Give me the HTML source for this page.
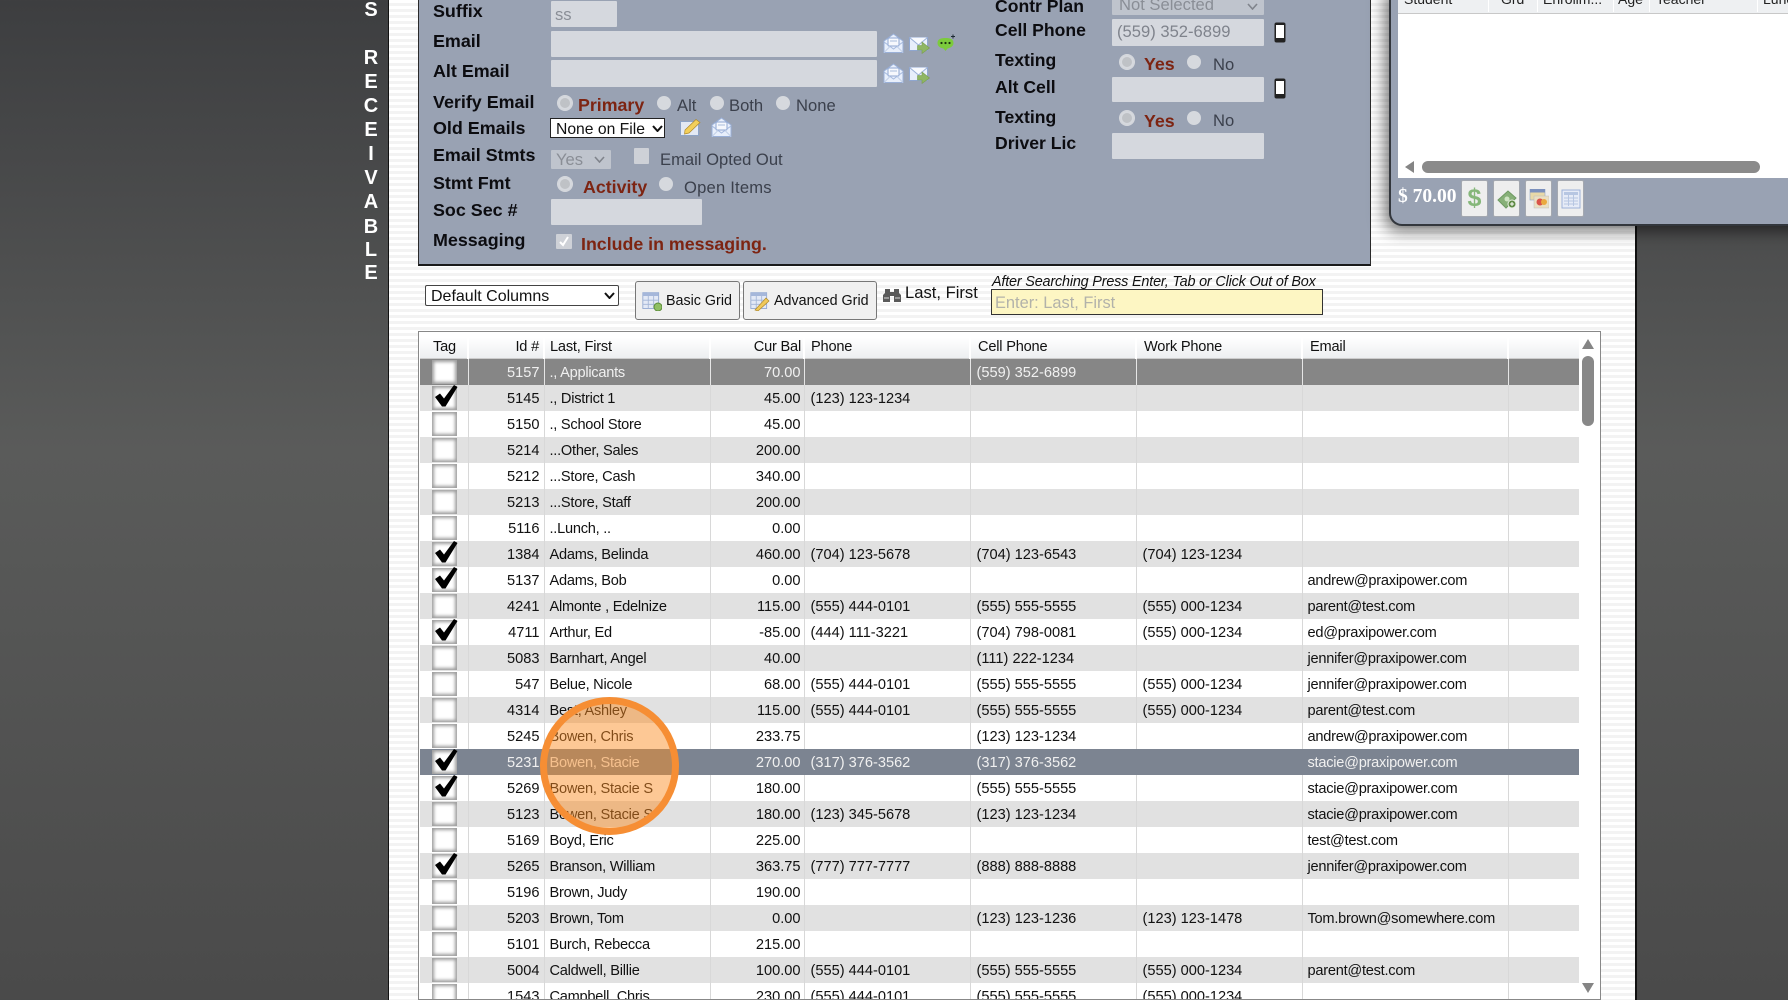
<!DOCTYPE html>
<html><head><meta charset="utf-8"><title>Accounts Receivable</title>
<style>
html,body{margin:0;padding:0;width:1788px;height:1000px;overflow:hidden}
body{position:relative;background:linear-gradient(180deg,#3d3e40 0,#5a5b5a 45%,#4a4a4a 100%);font-family:"Liberation Sans",sans-serif;color:#111}
.a{position:absolute}
.t{position:absolute;white-space:nowrap;line-height:20px;height:20px}
.page{position:absolute;left:388px;top:0;width:1246px;height:1000px;border-left:1px solid #111;border-right:2px solid #111;background:repeating-linear-gradient(180deg,#fff 0,#fff 3px,#f3f3f3 3px,#f3f3f3 6px);box-sizing:content-box}
.v{position:absolute;left:356px;width:30px;text-align:center;color:#fff;font:bold 20px/24px "Liberation Sans",sans-serif}
.panel{position:absolute;left:418px;top:-10px;width:951px;height:273px;background:#99a2b3;border:1px solid #2a2a2a;border-bottom:2px solid #1a1a1a}
.l{font-weight:bold;font-size:17.6px;color:#0c0c10}
.lx{font-size:17.9px}
.g{font-size:16.6px;color:#3b404c}
.r{font-weight:bold;font-size:17.8px;color:#7d2412}
.in{position:absolute;background:#d5d8de;border-radius:1px}
.rad{position:absolute;width:14px;height:14px;border-radius:50%;background:#d6d9de}
.rad.on{background:#bfc2c6;box-shadow:0 0 0 2px #d6d9de inset,0 0 0 1px #d6d9de}
.btn{position:absolute;background:#f0f0f0;border:1px solid #777;border-radius:3px;box-sizing:border-box;font-size:14.3px;line-height:20px}
table{border-collapse:collapse;table-layout:fixed;width:1159px;font-size:14.6px}
td,th{height:26px;padding:2px 3px 0 6px;box-sizing:border-box;border-right:1px solid #d8d8d8;white-space:nowrap;overflow:hidden;text-align:left;font-weight:normal;line-height:24px}
td:nth-child(3),td:nth-child(8){letter-spacing:-.25px;padding-left:5px}
th{height:27px;padding-top:2px;background:linear-gradient(180deg,#fff 20%,#eceef0 100%);border-right:2px solid #fff;box-shadow:inset 0 -1px #ccc;letter-spacing:-.2px}
th:nth-child(3){padding-left:5px}
td.n{text-align:right;padding-right:3px}
td:nth-child(2){padding-right:4px}
th.n{text-align:right}
td:first-child,th:first-child{text-align:center;padding-left:0;padding-right:0;position:relative}
th:first-child{padding-left:2px}
tr.e td{background:#e1e1e1}
tr.s0 td{background:#868686;color:#f0f0f0;border-right-color:#e6e6e6}
tr.s1 td{background:#7c8491;color:#f0f0f0;border-right-color:#7c8491}
td:last-child,th:last-child{border-right:0}
.c{position:absolute;left:12px;top:1px;width:25px;height:24px;background:#fff;box-shadow:inset 0 0 3px 2px #9c9c9c}
.c svg{position:absolute;left:2px;top:-1px;width:24px;height:22px;overflow:visible}
.circle{position:absolute;left:540px;top:697px;width:139px;height:138px;box-sizing:border-box;border-radius:50%;border:7px solid #f68e34;background:rgba(251,140,34,.48)}
.pop{position:absolute;left:1389px;top:-12px;width:430px;height:238px;box-sizing:border-box;background:#99a2b3;border:2px solid #33373d;border-radius:0 0 0 13px;box-shadow:-4px 5px 16px rgba(0,0,0,.55)}
.ph{font-size:14px;color:#222}
.pb{position:absolute;top:180px;width:27px;height:37px;background:#eeeeee;border:1px solid #a4a8b0;box-sizing:border-box;border-radius:2px}
.pb svg{position:absolute;left:3px;top:8px;width:20px;height:20px}
</style></head>
<body>
<svg width="0" height="0" style="position:absolute">
<defs>
<symbol id="chk" viewBox="0 0 24 22"><path d="M1 12 L6 8.500 L10 13.500 L20 0 L23.500 2 L11.500 21.500 L8 21.500 Z" fill="#000"/></symbol>
<symbol id="env" viewBox="0 0 21 20"><path d="M1 8 L10.500 1 L20 8 V19.500 H1Z" fill="#e8effb" stroke="#9ab0d8"/><rect x="5" y="5" width="11" height="8" rx="1" fill="#f6f8fd" stroke="#8fa6d0"/><path d="M7 8h7" stroke="#a8bbdc" fill="none"/><path d="M1 9 L10.500 16 L20 9" fill="none" stroke="#a5b9de"/><path d="M1 19.500 L7 13.500 M20 19.500 L14 13.500" stroke="#c2d0e8" fill="none"/></symbol>
<symbol id="mail" viewBox="0 0 21 17"><rect x="0.500" y="0.500" width="18" height="13" fill="#e8effb" stroke="#8fa6d0"/><path d="M0.500 0.500 L9.500 8 L18.500 0.500" fill="#f8fafe" stroke="#9ab0d8"/><path d="M8.500 8.500 H13 V5 L20.500 11 L13 16.500 V13 H8.500Z" fill="#8fb663" stroke="#7a9e50" stroke-width=".6"/></symbol>
<symbol id="chat" viewBox="0 0 19 19"><path d="M0.500 10 C0.500 6 4 5 8.500 5 C13 5 16.500 6 16.500 10 C16.500 13.500 13 15 10.500 15.500 L8.500 18 L6.500 15.500 C3.500 15 .5 13.500 .5 10Z" fill="#7ccb3c"/><circle cx="4.500" cy="10" r="1.100" fill="#1d3413"/><circle cx="8.500" cy="10" r="1.100" fill="#1d3413"/><circle cx="12.500" cy="10" r="1.100" fill="#1d3413"/><path d="M16 1.500v4M14 3.500h4" stroke="#1d2a33" stroke-width="1"/></symbol>
<symbol id="note" viewBox="0 0 21 17"><rect x="0.500" y="2.500" width="18" height="14" fill="#e3e9f4" stroke="#8da3c6"/><path d="M5 11 L16 0.500 L20 3.500 L9 14 L4.500 15Z" fill="#f3cf5a" stroke="#b08a2a" stroke-width=".7"/></symbol>
<symbol id="phone" viewBox="0 0 12 21"><rect x="0.500" y="0.500" width="11" height="20" rx="2" fill="#222"/><rect x="2" y="3" width="8" height="13" fill="#fff"/></symbol>
<symbol id="grid" viewBox="0 0 24 24"><rect x="1" y="2" width="19" height="19" fill="#e3e9f6" stroke="#8ca3cf"/><rect x="1" y="2" width="19" height="4" fill="#a5b7da"/><path d="M1 11h19M1 16h19M7.500 6v15M14 6v15" stroke="#a2b4d6" fill="none"/></symbol>
</defs></svg>

<div class="page"></div>

<div class="v" style="top:-2px">S</div>
<div class="v" style="top:46px">R</div>
<div class="v" style="top:70px">E</div>
<div class="v" style="top:94px">C</div>
<div class="v" style="top:118px">E</div>
<div class="v" style="top:142px">I</div>
<div class="v" style="top:166px">V</div>
<div class="v" style="top:190px">A</div>
<div class="v" style="top:215px">B</div>
<div class="v" style="top:238px">L</div>
<div class="v" style="top:261px">E</div>

<div class="panel"></div>

<div class="t l lx" style="left:433px;top:1px">Suffix</div>
<div class="t l lx" style="left:433px;top:31px">Email</div>
<div class="t l lx" style="left:433px;top:61px">Alt Email</div>
<div class="t l lx" style="left:433px;top:92px">Verify Email</div>
<div class="t l lx" style="left:433px;top:118px">Old Emails</div>
<div class="t l lx" style="left:433px;top:145px">Email Stmts</div>
<div class="t l lx" style="left:433px;top:173px">Stmt Fmt</div>
<div class="t l lx" style="left:433px;top:200px">Soc Sec #</div>
<div class="t l lx" style="left:433px;top:230px">Messaging</div>

<div class="in" style="left:551px;top:1px;width:66px;height:26px"></div>
<div class="t" style="left:555px;top:5px;font-size:16.6px;color:#8a8e96">ss</div>
<div class="in" style="left:551px;top:31px;width:326px;height:26px"></div>
<div class="in" style="left:551px;top:60px;width:326px;height:27px"></div>
<svg class="a" style="left:883px;top:33px;width:21px;height:20px"><use href="#env"/></svg>
<svg class="a" style="left:909px;top:37px;width:21px;height:17px"><use href="#mail"/></svg>
<svg class="a" style="left:937px;top:33px;width:19px;height:19px"><use href="#chat"/></svg>
<svg class="a" style="left:883px;top:63px;width:21px;height:20px"><use href="#env"/></svg>
<svg class="a" style="left:909px;top:67px;width:21px;height:17px"><use href="#mail"/></svg>

<div class="rad on" style="left:558px;top:96px"></div>
<div class="t r" style="left:578px;top:95px">Primary</div>
<div class="rad" style="left:657px;top:96px"></div>
<div class="t g" style="left:677px;top:96px">Alt</div>
<div class="rad" style="left:710px;top:96px"></div>
<div class="t g" style="left:729px;top:96px">Both</div>
<div class="rad" style="left:776px;top:96px"></div>
<div class="t g" style="left:796px;top:96px">None</div>

<div class="a" style="left:550px;top:118px;width:115px;height:20px;background:#fff;border:1px solid #222;box-sizing:border-box"></div>
<div class="t" style="left:556px;top:120px;font-size:15.7px;color:#111">None on File</div>
<svg class="a" style="left:652px;top:125px;width:11px;height:7px"><path d="M1 1 L5.500 6 L10 1" fill="none" stroke="#111" stroke-width="2"/></svg>
<svg class="a" style="left:680px;top:119px;width:21px;height:17px"><use href="#note"/></svg>
<svg class="a" style="left:711px;top:117px;width:21px;height:20px"><use href="#env"/></svg>

<div class="a" style="left:551px;top:150px;width:60px;height:19px;background:#bfc4cd;border-radius:1px"></div>
<div class="t" style="left:556px;top:150px;font-size:16.6px;color:#8a8e96">Yes</div>
<svg class="a" style="left:594px;top:156px;width:11px;height:7px"><path d="M1 1 L5.500 6 L10 1" fill="none" stroke="#80848c" stroke-width="1.600"/></svg>
<div class="a" style="left:634px;top:148px;width:15px;height:16px;background:#ced1d7;border-radius:1px"></div>
<div class="t g" style="left:660px;top:150px">Email Opted Out</div>

<div class="rad on" style="left:558px;top:177px"></div>
<div class="t r" style="left:583px;top:177px">Activity</div>
<div class="rad" style="left:659px;top:177px"></div>
<div class="t g" style="left:684px;top:178px;letter-spacing:.2px">Open Items</div>

<div class="in" style="left:551px;top:199px;width:151px;height:26px"></div>

<div class="a" style="left:556px;top:234px;width:16px;height:15px;background:#ced1d7;border-radius:1px"></div>
<svg class="a" style="left:556px;top:234px;width:16px;height:15px"><path d="M4 8 L7 11 L12 3" fill="none" stroke="#fff" stroke-width="2"/></svg>
<div class="t r" style="left:581px;top:234px">Include in messaging.</div>

<div class="t l" style="left:995px;top:-4px">Contr Plan</div>
<div class="t l" style="left:995px;top:20px">Cell Phone</div>
<div class="t l" style="left:995px;top:50px">Texting</div>
<div class="t l" style="left:995px;top:77px">Alt Cell</div>
<div class="t l" style="left:995px;top:107px">Texting</div>
<div class="t l" style="left:995px;top:133px">Driver Lic</div>

<div class="a" style="left:1112px;top:-5px;width:152px;height:20px;background:#bfc4cd;border-radius:1px"></div>
<div class="t" style="left:1119px;top:-5px;font-size:16.6px;color:#8a8e96">Not Selected</div>
<svg class="a" style="left:1247px;top:3px;width:11px;height:7px"><path d="M1 1 L5.500 6 L10 1" fill="none" stroke="#80848c" stroke-width="1.600"/></svg>
<div class="in" style="left:1112px;top:19px;width:152px;height:27px"></div>
<div class="t" style="left:1117px;top:22px;font-size:16.6px;color:#7f838c">(559) 352-6899</div>
<svg class="a" style="left:1274px;top:22px;width:12px;height:21px"><use href="#phone"/></svg>
<div class="rad on" style="left:1120px;top:55px"></div>
<div class="t r" style="left:1144px;top:54px">Yes</div>
<div class="rad" style="left:1187px;top:55px"></div>
<div class="t g" style="left:1213px;top:55px">No</div>
<div class="in" style="left:1112px;top:77px;width:152px;height:25px"></div>
<svg class="a" style="left:1274px;top:78px;width:12px;height:21px"><use href="#phone"/></svg>
<div class="rad on" style="left:1120px;top:111px"></div>
<div class="t r" style="left:1144px;top:111px">Yes</div>
<div class="rad" style="left:1187px;top:111px"></div>
<div class="t g" style="left:1213px;top:111px">No</div>
<div class="in" style="left:1112px;top:133px;width:152px;height:26px"></div>

<div class="a" style="left:425px;top:285px;width:194px;height:21px;background:#fff;border:1px solid #444;border-radius:2px;box-sizing:border-box"></div>
<div class="t" style="left:431px;top:287px;font-size:16px;color:#111">Default Columns</div>
<svg class="a" style="left:604px;top:292px;width:11px;height:7px"><path d="M1 1 L5.500 6 L10 1" fill="none" stroke="#111" stroke-width="2"/></svg>

<div class="btn" style="left:635px;top:281px;width:105px;height:39px"><span class="a" style="left:30px;top:9px">Basic Grid</span></div>
<svg class="a" style="left:642px;top:291px;width:20px;height:20px"><use href="#grid"/><circle cx="16" cy="16" r="4" fill="#8fbf64" stroke="#5c8d3a"/></svg>
<div class="btn" style="left:743px;top:281px;width:134px;height:39px"><span class="a" style="left:30px;top:9px">Advanced Grid</span></div>
<svg class="a" style="left:750px;top:291px;width:20px;height:20px"><use href="#grid"/><path d="M5 19 L16 7 L19 10 L8 20Z" fill="#f0c95a" stroke="#b08a2a" stroke-width=".7"/></svg>

<svg class="a" style="left:883px;top:286px;width:18px;height:16px" viewBox="0 0 18 16"><path d="M2 3h5v3h4V3h5v4l2 2v7h-7v-6H7v6H0V9l2-2Z" fill="#5a5a5a"/><path d="M1 11h5v2H1zM12 11h5v2h-5z" fill="#9a9a9a"/></svg>
<div class="t" style="left:905px;top:283px;font-size:16.6px;color:#111">Last, First</div>
<div class="t" style="left:992px;top:272px;font-size:14.4px;letter-spacing:-.18px;font-style:italic;color:#111">After Searching Press Enter, Tab or Click Out of Box</div>
<div class="a" style="left:991px;top:289px;width:332px;height:26px;background:#fdf6c3;border:1px solid #333;box-sizing:border-box"></div>
<div class="t" style="left:995px;top:293px;font-size:16.4px;color:#b2b2aa">Enter: Last, First</div>

<div class="a" style="left:418px;top:331px;width:1181px;height:667px;background:#fff;border:1px solid #888;overflow:hidden;box-sizing:content-box">
<table style="position:absolute;left:1px;top:0">
<colgroup><col style="width:48px"><col style="width:76px"><col style="width:166px"><col style="width:94px"><col style="width:166px"><col style="width:166px"><col style="width:166px"><col style="width:206px"><col style="width:71px"></colgroup>
<tr><th>Tag</th><th class="n" style="padding-right:4px">Id #</th><th>Last, First</th><th class="n" style="padding-right:2px">Cur Bal</th><th>Phone</th><th style="padding-left:7px">Cell Phone</th><th style="padding-left:7px">Work Phone</th><th style="padding-left:7px">Email</th><th></th></tr>
<tr class="s0"><td><i class="c"></i></td><td class="n">5157</td><td>., Applicants</td><td class="n">70.00</td><td></td><td>(559) 352-6899</td><td></td><td></td><td></td></tr>
<tr class="e"><td><i class="c"><svg><use href="#chk"/></svg></i></td><td class="n">5145</td><td>., District 1</td><td class="n">45.00</td><td>(123) 123-1234</td><td></td><td></td><td></td><td></td></tr>
<tr><td><i class="c"></i></td><td class="n">5150</td><td>., School Store</td><td class="n">45.00</td><td></td><td></td><td></td><td></td><td></td></tr>
<tr class="e"><td><i class="c"></i></td><td class="n">5214</td><td>...Other, Sales</td><td class="n">200.00</td><td></td><td></td><td></td><td></td><td></td></tr>
<tr><td><i class="c"></i></td><td class="n">5212</td><td>...Store, Cash</td><td class="n">340.00</td><td></td><td></td><td></td><td></td><td></td></tr>
<tr class="e"><td><i class="c"></i></td><td class="n">5213</td><td>...Store, Staff</td><td class="n">200.00</td><td></td><td></td><td></td><td></td><td></td></tr>
<tr><td><i class="c"></i></td><td class="n">5116</td><td>..Lunch, ..</td><td class="n">0.00</td><td></td><td></td><td></td><td></td><td></td></tr>
<tr class="e"><td><i class="c"><svg><use href="#chk"/></svg></i></td><td class="n">1384</td><td>Adams, Belinda</td><td class="n">460.00</td><td>(704) 123-5678</td><td>(704) 123-6543</td><td>(704) 123-1234</td><td></td><td></td></tr>
<tr><td><i class="c"><svg><use href="#chk"/></svg></i></td><td class="n">5137</td><td>Adams, Bob</td><td class="n">0.00</td><td></td><td></td><td></td><td>andrew@praxipower.com</td><td></td></tr>
<tr class="e"><td><i class="c"></i></td><td class="n">4241</td><td>Almonte , Edelnize</td><td class="n">115.00</td><td>(555) 444-0101</td><td>(555) 555-5555</td><td>(555) 000-1234</td><td>parent@test.com</td><td></td></tr>
<tr><td><i class="c"><svg><use href="#chk"/></svg></i></td><td class="n">4711</td><td>Arthur, Ed</td><td class="n">-85.00</td><td>(444) 111-3221</td><td>(704) 798-0081</td><td>(555) 000-1234</td><td>ed@praxipower.com</td><td></td></tr>
<tr class="e"><td><i class="c"></i></td><td class="n">5083</td><td>Barnhart, Angel</td><td class="n">40.00</td><td></td><td>(111) 222-1234</td><td></td><td>jennifer@praxipower.com</td><td></td></tr>
<tr><td><i class="c"></i></td><td class="n">547</td><td>Belue, Nicole</td><td class="n">68.00</td><td>(555) 444-0101</td><td>(555) 555-5555</td><td>(555) 000-1234</td><td>jennifer@praxipower.com</td><td></td></tr>
<tr class="e"><td><i class="c"></i></td><td class="n">4314</td><td>Best, Ashley</td><td class="n">115.00</td><td>(555) 444-0101</td><td>(555) 555-5555</td><td>(555) 000-1234</td><td>parent@test.com</td><td></td></tr>
<tr><td><i class="c"></i></td><td class="n">5245</td><td>Bowen, Chris</td><td class="n">233.75</td><td></td><td>(123) 123-1234</td><td></td><td>andrew@praxipower.com</td><td></td></tr>
<tr class="s1"><td><i class="c"><svg><use href="#chk"/></svg></i></td><td class="n">5231</td><td>Bowen, Stacie</td><td class="n">270.00</td><td>(317) 376-3562</td><td>(317) 376-3562</td><td></td><td>stacie@praxipower.com</td><td></td></tr>
<tr><td><i class="c"><svg><use href="#chk"/></svg></i></td><td class="n">5269</td><td>Bowen, Stacie S</td><td class="n">180.00</td><td></td><td>(555) 555-5555</td><td></td><td>stacie@praxipower.com</td><td></td></tr>
<tr class="e"><td><i class="c"></i></td><td class="n">5123</td><td>Bowen, Stacie S</td><td class="n">180.00</td><td>(123) 345-5678</td><td>(123) 123-1234</td><td></td><td>stacie@praxipower.com</td><td></td></tr>
<tr><td><i class="c"></i></td><td class="n">5169</td><td>Boyd, Eric</td><td class="n">225.00</td><td></td><td></td><td></td><td>test@test.com</td><td></td></tr>
<tr class="e"><td><i class="c"><svg><use href="#chk"/></svg></i></td><td class="n">5265</td><td>Branson, William</td><td class="n">363.75</td><td>(777) 777-7777</td><td>(888) 888-8888</td><td></td><td>jennifer@praxipower.com</td><td></td></tr>
<tr><td><i class="c"></i></td><td class="n">5196</td><td>Brown, Judy</td><td class="n">190.00</td><td></td><td></td><td></td><td></td><td></td></tr>
<tr class="e"><td><i class="c"></i></td><td class="n">5203</td><td>Brown, Tom</td><td class="n">0.00</td><td></td><td>(123) 123-1236</td><td>(123) 123-1478</td><td>Tom.brown@somewhere.com</td><td></td></tr>
<tr><td><i class="c"></i></td><td class="n">5101</td><td>Burch, Rebecca</td><td class="n">215.00</td><td></td><td></td><td></td><td></td><td></td></tr>
<tr class="e"><td><i class="c"></i></td><td class="n">5004</td><td>Caldwell, Billie</td><td class="n">100.00</td><td>(555) 444-0101</td><td>(555) 555-5555</td><td>(555) 000-1234</td><td>parent@test.com</td><td></td></tr>
<tr><td><i class="c"></i></td><td class="n">1543</td><td>Campbell, Chris</td><td class="n">230.00</td><td>(555) 444-0101</td><td>(555) 555-5555</td><td>(555) 000-1234</td><td></td><td></td></tr>
</table>
</div>

<svg class="a" style="left:1582px;top:339px;width:12px;height:10px"><path d="M6 0 L12 10 H0Z" fill="#858585"/></svg>
<div class="a" style="left:1582px;top:356px;width:12px;height:70px;background:#888;border-radius:6px"></div>
<svg class="a" style="left:1582px;top:983px;width:12px;height:10px"><path d="M0 0 H12 L6 10Z" fill="#858585"/></svg>

<div class="circle"></div>

<div class="pop"></div>
<div class="a" style="left:1398px;top:0;width:390px;height:178px;background:#fff"></div>
<div class="a" style="left:1398px;top:0;width:390px;height:13px;background:#eef0f2;border-bottom:1px solid #c8c8c8"></div>
<div class="a" style="left:1488px;top:0;width:1px;height:12px;background:#fff"></div>
<div class="a" style="left:1537px;top:0;width:1px;height:12px;background:#fff"></div>
<div class="a" style="left:1613px;top:0;width:1px;height:12px;background:#fff"></div>
<div class="a" style="left:1649px;top:0;width:1px;height:12px;background:#fff"></div>
<div class="a" style="left:1757px;top:0;width:1px;height:12px;background:#fff"></div>
<div class="t ph" style="left:1404px;top:-11px">Student</div>
<div class="t ph" style="left:1501px;top:-11px">Grd</div>
<div class="t ph" style="left:1543px;top:-11px">Enrollm...</div>
<div class="t ph" style="left:1618px;top:-11px">Age</div>
<div class="t ph" style="left:1656px;top:-11px">Teacher</div>
<div class="t ph" style="left:1763px;top:-11px">Lunch</div>
<svg class="a" style="left:1405px;top:161px;width:9px;height:12px"><path d="M9 0 V12 L0 6Z" fill="#858585"/></svg>
<div class="a" style="left:1422px;top:161px;width:338px;height:12px;background:#8a8a8a;border-radius:6px"></div>

<div class="t" style="left:1398px;top:187px;font:bold 19.5px/20px 'Liberation Serif',serif;color:#fff">$ 70.00</div>
<div class="pb" style="left:1461px"><span class="a" style="left:0;width:25px;text-align:center;top:5px;font:bold 25px/25px 'Liberation Sans',sans-serif;color:#86b77a">$</span></div>
<div class="pb" style="left:1493px"><svg viewBox="0 0 20 20"><path d="M1 11 L11 2 L19 9 L9 19Z" fill="#87b078" stroke="#6f9a63"/><circle cx="10" cy="10" r="2.500" fill="#cfe4c3"/><circle cx="15" cy="15" r="4" fill="#5f8a45" stroke="#e8efe2"/><path d="M15 13v4M13 15h4" stroke="#fff"/></svg></div>
<div class="pb" style="left:1525px"><svg viewBox="0 0 20 20"><rect x="1" y="0" width="15" height="11" fill="#e8d9a8" stroke="#8fa4c8" stroke-width=".6"/><rect x="1" y="0" width="15" height="3.500" fill="#7b90bd"/><rect x="5" y="7" width="15" height="12" fill="#eadfc2" stroke="#bbb" stroke-width=".5"/><circle cx="11" cy="13" r="3.500" fill="#d9534a"/><circle cx="15" cy="13" r="3" fill="#eaa93f"/></svg></div>
<div class="pb" style="left:1557px"><svg viewBox="0 0 20 20"><rect x="1" y="1" width="18" height="18" fill="#e6ebf7" stroke="#9db1d8"/><rect x="3" y="3" width="14" height="3" fill="#b7c6e2"/><path d="M3 9h14M3 12h14M3 15h14M7.500 6v11M12.500 6v11" stroke="#b7c6e2" fill="none"/></svg></div>
</body></html>
